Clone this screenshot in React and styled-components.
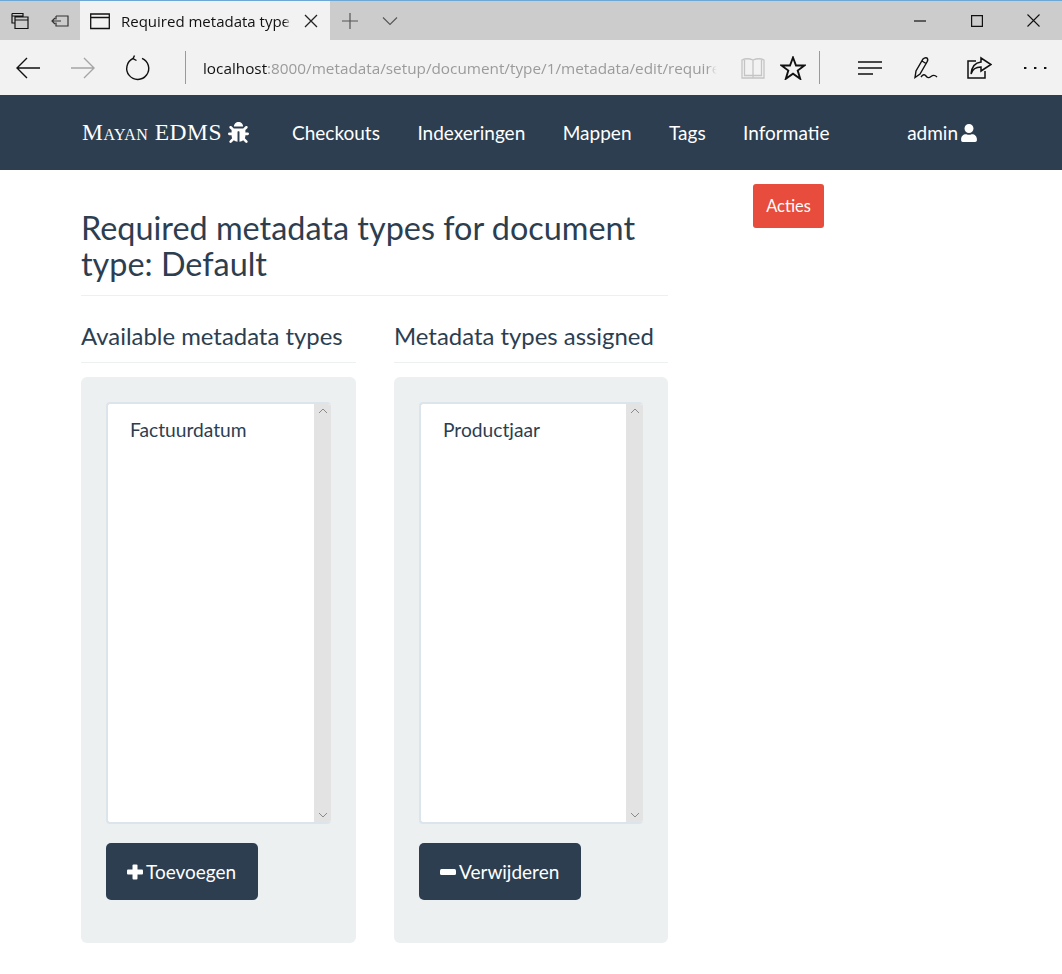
import React from "react";
import styled, { createGlobalStyle } from "styled-components";
import { FaBug, FaUser } from "react-icons/fa";

const Global = createGlobalStyle`
  html, body { margin: 0; padding: 0; background: #fff; }
  body { font-family: Lato, "Liberation Sans", sans-serif; color: #2c3e50; }
  * { box-sizing: border-box; }
`;

const Page = styled.div`
  width: 1062px;
  height: 974px;
  overflow: hidden;
  display: flex;
  flex-direction: column;
`;

/* browser chrome */
const TabStrip = styled.div`
  display: flex;
  height: 40px;
  background: #cccccc;
  border-top: 1px solid #6ea6d4;
`;
const StripButton = styled.div`
  width: ${(p) => p.$w || 40}px;
  display: flex;
  align-items: center;
  justify-content: center;
  flex: none;
`;
const Tab = styled.div`
  width: 250px;
  display: flex;
  align-items: center;
  background: #f2f2f2;
  padding-left: 10px;
  flex: none;
`;
const TabTitle = styled.div`
  font-family: "Open Sans", "Noto Sans", sans-serif;
  font-size: 15px;
  color: #111;
  width: 170px;
  margin-left: 11px;
  white-space: nowrap;
  overflow: hidden;
  mask-image: linear-gradient(to right, #000 96%, transparent);
`;
const TabClose = styled.div`
  margin-left: 13px;
  display: flex;
`;
const Spacer = styled.div`
  flex: 1;
`;
const Toolbar = styled.div`
  display: flex;
  align-items: center;
  height: 55px;
  background: #f2f2f2;
  flex: none;
`;
const ToolButton = styled.div`
  width: ${(p) => p.$w || 55}px;
  margin-left: ${(p) => p.$ml || 0}px;
  height: 55px;
  flex: none;
  display: flex;
  align-items: center;
  justify-content: center;
`;
const ToolDivider = styled.div`
  width: 1px;
  height: 33px;
  background: #9a9a9a;
  flex: none;
  margin: ${(p) => p.$m};
`;
const Address = styled.div`
  width: 514px;
  flex: none;
  font-family: "Open Sans", "Noto Sans", sans-serif;
  font-size: 15.3px;
  color: #9b9b9b;
  white-space: nowrap;
  overflow: hidden;
  mask-image: linear-gradient(to right, #000 98%, transparent);
  b {
    font-weight: 400;
    color: #111;
  }
`;

/* app navbar */
const Navbar = styled.nav`
  height: 75px;
  flex: none;
  background: #2c3e50;
  color: #fff;
  display: flex;
  align-items: center;
  padding: 0 84px 0 82px;
`;
const Logo = styled.div`
  width: 210px;
  flex: none;
  display: flex;
  align-items: center;
  gap: 6px;
  font-family: "Liberation Serif", serif;
  font-size: 23.5px;
  font-variant: small-caps;
  letter-spacing: 0.5px;
  white-space: nowrap;
`;
const NavLinks = styled.div`
  display: flex;
  gap: 37.5px;
`;
const NavLink = styled.a`
  font-size: 19px;
  color: #fff;
`;
const UserLink = styled.a`
  margin-left: auto;
  display: flex;
  align-items: center;
  gap: 2px;
  font-size: 19px;
  color: #fff;
`;

/* content */
const Content = styled.div`
  display: flex;
  padding: 14px 0 0 81px;
`;
const Main = styled.main`
  width: 587px;
  flex: none;
`;
const Title = styled.h1`
  margin: 26px 0 0;
  padding-bottom: 13px;
  font-size: 32.4px;
  font-weight: 400;
  line-height: 36px;
  border-bottom: 1px solid #ecf0f1;
`;
const Columns = styled.div`
  display: grid;
  grid-template-columns: 275px 274px;
  gap: 38px;
`;
const ColumnTitle = styled.h3`
  margin: 26px 0 14px;
  padding-bottom: 12px;
  font-size: 23.9px;
  font-weight: 400;
  line-height: 28px;
  white-space: nowrap;
  border-bottom: 1px solid #ecf0f1;
`;
const Well = styled.div`
  height: 566px;
  background: #ecf0f1;
  border-radius: 6px;
  padding: 25px;
`;
const ListBox = styled.div`
  height: 422px;
  display: flex;
  background: #fff;
  border: 2px solid #dce4ec;
  border-right: 0;
  border-radius: 4px;
  overflow: hidden;
`;
const Options = styled.div`
  flex: 1;
  padding: 13px 22px;
  font-size: 19.2px;
  line-height: 26px;
`;
const Scrollbar = styled.div`
  width: 17px;
  margin-top: -2px;
  margin-bottom: -2px;
  background: #e3e3e3;
  display: flex;
  flex-direction: column;
  justify-content: space-between;
  align-items: center;
  padding: 6px 0;
`;
const ActionButton = styled.button`
  display: flex;
  align-items: center;
  gap: 3px;
  height: 57px;
  margin-top: 19px;
  padding: 0 22px 0 21px;
  border: 0;
  border-radius: 5px;
  background: #2c3e50;
  color: #fff;
  font-family: inherit;
  font-size: 19px;
`;
const Aside = styled.aside`
  padding-left: 85px;
`;
const Acties = styled.button`
  width: 71px;
  height: 44px;
  padding: 0 0 1px;
  border: 0;
  border-radius: 3px;
  background: #e74c3c;
  color: #fff;
  font-family: inherit;
  font-size: 16.4px;
`;

const Ico = ({ w = 24, h = 24, sw = 1.4, color = "#111", children }) => (
  <svg width={w} height={h} viewBox={`0 0 ${w} ${h}`} fill="none" stroke={color} strokeWidth={sw}>
    {children}
  </svg>
);

const Chevron = ({ up }) => (
  <Ico w={10} h={6} sw={1} color="#8a8a8a">
    <path d={up ? "M1 5 L5 1 L9 5" : "M1 1 L5 5 L9 1"} />
  </Ico>
);

const PlusGlyph = () => (
  <svg width="16" height="16" viewBox="0 0 16 16" fill="#fff">
    <rect x="0" y="5.500" width="16" height="5" rx="1" />
    <rect x="5.500" y="0.500" width="5" height="15" rx="1" />
  </svg>
);

const MinusGlyph = () => (
  <svg width="16" height="16" viewBox="0 0 16 16" fill="#fff">
    <rect x="0" y="5" width="16" height="6" rx="1.500" />
  </svg>
);

const MetadataColumn = ({ title, item, icon, label }) => (
  <div>
    <ColumnTitle>{title}</ColumnTitle>
    <Well>
      <ListBox>
        <Options>{item}</Options>
        <Scrollbar>
          <Chevron up />
          <Chevron />
        </Scrollbar>
      </ListBox>
      <ActionButton>
        {icon}
        {label}
      </ActionButton>
    </Well>
  </div>
);

export default function App() {
  return (
    <Page>
      <Global />
      <TabStrip>
        <StripButton>
          <Ico w={20} h={20} sw={1.2}>
            <path d="M2 2.5H13V6M2 2.5V12H5M5 6H18V17.5H5ZM5 9H18M2 5H13" />
          </Ico>
        </StripButton>
        <StripButton>
          <Ico w={20} h={20} sw={1.2} color="#333">
            <path d="M6 5H18V15H6V11.5M6 8.5V5M11 10H2M5 7L2 10L5 13" />
          </Ico>
        </StripButton>
        <Tab>
          <Ico w={20} h={18} sw={1.3}>
            <path d="M.7 2H19.3V16.5H.7ZM.7 5.5H19.3" />
          </Ico>
          <TabTitle>Required metadata types for document type</TabTitle>
          <TabClose>
            <Ico w={14} h={14} sw={1.3} color="#222">
              <path d="M1 1L13 13M13 1L1 13" />
            </Ico>
          </TabClose>
        </Tab>
        <StripButton>
          <Ico w={18} h={18} sw={1.2} color="#555">
            <path d="M1 9H17M9 1V17" />
          </Ico>
        </StripButton>
        <StripButton>
          <Ico w={16} h={10} sw={1.1} color="#555">
            <path d="M1 1.5L8 8.5L15 1.5" />
          </Ico>
        </StripButton>
        <Spacer />
        <StripButton $w={57}>
          <Ico w={12} h={4} sw={1.2}>
            <path d="M0 2H12" />
          </Ico>
        </StripButton>
        <StripButton $w={57}>
          <Ico w={12} h={12} sw={1.2}>
            <path d="M.6.6H11.4V11.4H.6Z" />
          </Ico>
        </StripButton>
        <StripButton $w={57}>
          <Ico w={13} h={13} sw={1.1}>
            <path d="M.5.5L12.5 12.5M12.5.5L.5 12.5" />
          </Ico>
        </StripButton>
      </TabStrip>

      <Toolbar>
        <ToolButton>
          <Ico w={26} h={24}>
            <path d="M25 12H2M12 2L2 12L12 22" />
          </Ico>
        </ToolButton>
        <ToolButton>
          <Ico w={26} h={24} color="#a5a5a5">
            <path d="M1 12H24M14 2L24 12L14 22" />
          </Ico>
        </ToolButton>
        <ToolButton>
          <Ico w={26} h={26}>
            <path d="M8 3.5 A11 11 0 1 0 17 3.3 M9.5 0.5L8 3.6L11.5 5.5" />
          </Ico>
        </ToolButton>
        <ToolDivider $m="0 17px 0 20px" />
        <Address>
          <b>localhost</b>:8000/metadata/setup/document/type/1/metadata/edit/required
        </Address>
        <ToolButton $w={24} $ml={24}>
          <Ico w={24} h={24} color="#c4c4c4" sw={1.3}>
            <path d="M1 4Q6 1.500 12 4Q18 1.500 23 4V22H1ZM12 4V22M3.500 4V19.500H12M20.500 4V19.500H12" />
          </Ico>
        </ToolButton>
        <ToolButton $w={26} $ml={15}>
          <Ico w={26} h={24} sw={1.9}>
            <path d="M13 1.5L16 9.5H24.5L17.7 14.5L20.2 22.8L13 17.7L5.8 22.8L8.3 14.5L1.5 9.5H10Z" />
          </Ico>
        </ToolButton>
        <ToolDivider $m="0 37px 0 13px" />
        <ToolButton $w={26}>
          <Ico w={26} h={16} sw={1.4}>
            <path d="M1 2H25M1 8H25M1 14H16" />
          </Ico>
        </ToolButton>
        <ToolButton $w={26} $ml={30}>
          <Ico w={26} h={28} sw={1.4}>
            <path d="M2 23.500L3 17L10 5Q12 3 14 4Q15.500 5.500 14 8L7 20ZM9 7L13 9.500M8 23Q11 19 13 22T18 22.500T24 23" />
          </Ico>
        </ToolButton>
        <ToolButton $w={26} $ml={27}>
          <Ico w={26} h={24} sw={1.5}>
            <path d="M10 5H2V22H19V15M15 2L25 8.500L15 15V11Q7 11 5 18Q6 7 15 6Z" />
          </Ico>
        </ToolButton>
        <ToolButton $w={24} $ml={31}>
          <Ico w={24} h={4} sw={2.2}>
            <path d="M1 2H3.400M11 2H13.400M21 2H23.400" />
          </Ico>
        </ToolButton>
      </Toolbar>

      <Navbar>
        <Logo>
          Mayan EDMS
          <FaBug size={21} />
        </Logo>
        <NavLinks>
          <NavLink>Checkouts</NavLink>
          <NavLink>Indexeringen</NavLink>
          <NavLink>Mappen</NavLink>
          <NavLink>Tags</NavLink>
          <NavLink>Informatie</NavLink>
        </NavLinks>
        <UserLink>
          admin
          <FaUser size={18} />
        </UserLink>
      </Navbar>

      <Content>
        <Main>
          <Title>Required metadata types for document type: Default</Title>
          <Columns>
            <MetadataColumn
              title="Available metadata types"
              item="Factuurdatum"
              icon={<PlusGlyph />}
              label="Toevoegen"
            />
            <MetadataColumn
              title="Metadata types assigned"
              item="Productjaar"
              icon={<MinusGlyph />}
              label="Verwijderen"
            />
          </Columns>
        </Main>
        <Aside>
          <Acties>Acties</Acties>
        </Aside>
      </Content>
    </Page>
  );
}
